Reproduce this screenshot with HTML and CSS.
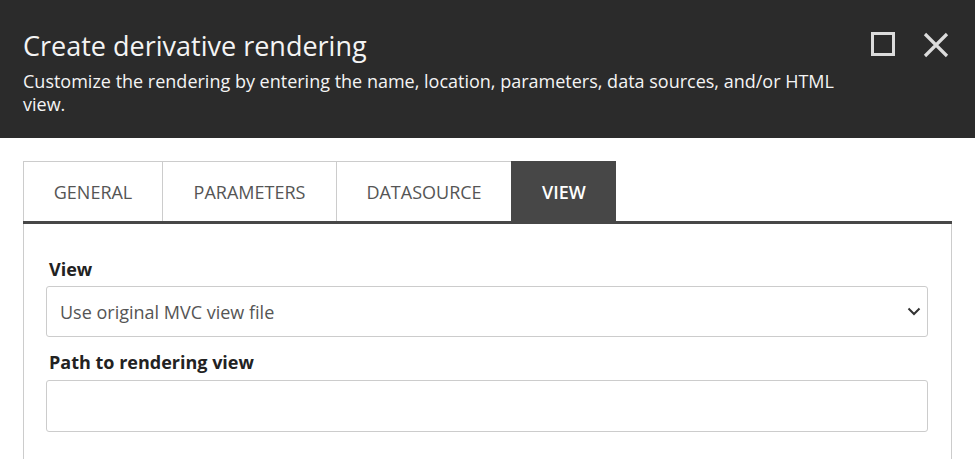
FILE: index.html
```html
<!DOCTYPE html>
<html lang="en">
<head>
<meta charset="utf-8">
<title>Create derivative rendering</title>
<link rel="stylesheet" href="styles.css">
</head>
<body>
<div class="dialog">
  <header class="dlg-header">
    <div class="dlg-titles">
      <h1 class="dlg-title">Create derivative rendering</h1>
      <p class="dlg-sub">Customize the rendering by entering the name, location, parameters, data sources, and/or HTML view.</p>
    </div>
    <div class="dlg-actions">
      <button class="icon-btn" aria-label="Maximize">
        <svg width="24" height="24" viewBox="0 0 24 24"><rect x="1.5" y="1.5" width="21" height="21" fill="none" stroke="#dcdcdc" stroke-width="3"/></svg>
      </button>
      <button class="icon-btn" aria-label="Close">
        <svg width="26" height="26" viewBox="0 0 26 26"><path d="M2 2 L24 24 M24 2 L2 24" stroke="#dcdcdc" stroke-width="3.2" fill="none"/></svg>
      </button>
    </div>
  </header>
  <main class="dlg-body">
    <nav class="tabs">
      <div class="tab">GENERAL</div>
      <div class="tab">PARAMETERS</div>
      <div class="tab">DATASOURCE</div>
      <div class="tab active">VIEW</div>
    </nav>
    <section class="panel">
      <label class="field-label">View</label>
      <div class="select">
        <span>Use original MVC view file</span>
        <svg width="14" height="9" viewBox="0 0 14 9"><path d="M1.5 1.5 L7 7 L12.5 1.5" stroke="#333" stroke-width="2" fill="none"/></svg>
      </div>
      <label class="field-label second">Path to rendering view</label>
      <div class="input"></div>
    </section>
  </main>
</div>
</body>
</html>
```

FILE: styles.css
```css
* { box-sizing: border-box; }
html, body { margin: 0; padding: 0; background: #fff; }
body { font-family: "Open Sans", "Noto Sans", sans-serif; overflow: hidden; }

.dlg-header {
  background: #2b2b2b;
  height: 138px;
  display: flex;
  justify-content: space-between;
  padding: 28px 26px 0 23px;
}
.dlg-title {
  margin: 0;
  font-weight: 400;
  font-size: 27px;
  line-height: 36px;
  color: #f4f4f4;
}
.dlg-sub {
  margin: 6px 0 0;
  font-size: 18px;
  line-height: 23px;
  color: #f4f4f4;
  width: 820px;
}
.dlg-actions {
  display: flex;
  gap: 28px;
  padding-top: 4px;
}
.icon-btn {
  border: 0;
  padding: 0;
  background: none;
  height: 26px;
  display: flex;
  align-items: flex-start;
}

.dlg-body { padding: 23px 23px 0 23px; }
.tabs {
  display: flex;
  border-bottom: 3px solid #474747;
}
.tab {
  height: 60px;
  display: flex;
  align-items: center;
  justify-content: center;
  font-size: 18px;
  color: #555;
  border-top: 1px solid #ccc;
  border-left: 1px solid #ccc;
  padding-top: 1px;
}
.tab:nth-child(1) { width: 139px; }
.tab:nth-child(2) { width: 174px; }
.tab:nth-child(3) { width: 175px; }
.tab.active {
  width: 105px;
  background: #474747;
  color: #fff;
  font-weight: 600;
  border-color: #474747;
}
.panel {
  border-left: 1px solid #ccc;
  border-right: 1px solid #ccc;
  padding: 33px 23px 40px 22px;
  display: flex;
  flex-direction: column;
}
.field-label {
  font-size: 18px;
  font-weight: 700;
  color: #222;
  line-height: 24px;
  padding-left: 3px;
  margin-bottom: 5px;
}
.field-label.second { margin-top: 13px; margin-bottom: 6px; }
.select, .input {
  height: 51px;
  border: 1px solid #ccc;
  border-radius: 3px;
  background: #fff;
}
.select {
  display: flex;
  align-items: center;
  justify-content: space-between;
  padding: 0 6px 0 13px;
  font-size: 18px;
  color: #555;
}
.input { height: 52px; }
```
